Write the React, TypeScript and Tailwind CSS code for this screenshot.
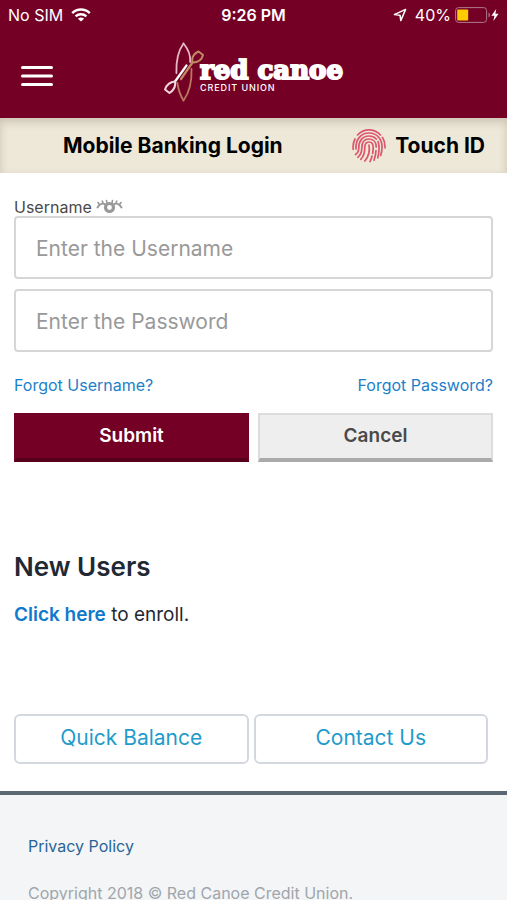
import { useState } from 'react';

function StatusBar() {
  return (
    <div className="grid h-[30px] grid-cols-3 items-center px-2 text-base text-white">
      <div className="flex items-center gap-2">
        <span>No SIM</span>
        <svg viewBox="0 0 20 14" className="h-[14px] w-5" fill="none" stroke="currentColor" strokeWidth="2.5">
          <path d="M1.2 5.2C6.2 0.4 13.8 0.4 18.8 5.2" />
          <path d="M4.6 8.4C7.7 5.6 12.3 5.6 15.4 8.4" />
          <path d="M10 13.6L6.9 10.7C8.7 9.2 11.3 9.2 13.1 10.7Z" fill="currentColor" stroke="none" />
        </svg>
      </div>
      <span className="text-center font-semibold">9:26 PM</span>
      <div className="flex items-center justify-end gap-1">
        <svg viewBox="0 0 14 14" className="mr-1 h-[14px] w-[14px]" fill="none" stroke="currentColor" strokeWidth="1.5" strokeLinejoin="round">
          <path d="M12.6 1.4L1.4 6.6L7 7.2L7.8 12.6Z" />
        </svg>
        <span>40%</span>
        <svg viewBox="0 0 36 16" className="h-4 w-9" fill="none">
          <rect x="0.6" y="0.6" width="31" height="14.8" rx="3" stroke="#b0788a" />
          <rect x="2.2" y="2.5" width="11" height="11" rx="1" fill="#ffcc00" />
          <path d="M33.5 5.5C35.4 6.3 35.4 9.7 33.5 10.5Z" fill="#b0788a" />
        </svg>
        <svg viewBox="0 0 8 12" className="-ml-1 h-3 w-2" fill="currentColor">
          <path d="M5.2 0L0.4 6.8H3.4L2.4 12L7.6 4.8H4.4Z" />
        </svg>
      </div>
    </div>
  );
}

function Logo() {
  return (
    <a href="#home" className="flex items-center text-white" aria-label="red canoe credit union">
      <svg viewBox="0 0 40 60" className="h-[60px] w-10" fill="none" strokeLinecap="round" strokeLinejoin="round">
        <path d="M19.5 1.5C14 9 12 19 12.4 31" stroke="#e6b7c4" strokeWidth="1.8" />
        <path d="M19.5 1.5C24.5 7.5 26.7 14 26.2 20" stroke="#e6b7c4" strokeWidth="1.8" />
        <path d="M27.5 27C28 40 25 51 19.5 58.5" stroke="#b97a5c" strokeWidth="1.8" />
        <path d="M13.3 41C14.5 48 16.5 54 19.5 58.5" stroke="#b97a5c" strokeWidth="1.8" />
        <path d="M22.5 23.5L11 39.5" stroke="#fff" strokeWidth="2.2" />
        <path d="M11 39.5C6 40 2.5 43 1 47.5L5.5 51C9.5 48.5 11.8 44.5 11 39.5Z" stroke="#f3d5dd" strokeWidth="2" />
        <path d="M17 37L28.5 20.5" stroke="#c08a63" strokeWidth="2.2" />
        <path d="M28.5 20.5C27.5 15.5 30 11.5 34.5 9.5L39 13C38 17 34.5 20.5 28.5 20.5Z" stroke="#c08a63" strokeWidth="2" />
      </svg>
      <span className="-ml-1 flex flex-col pt-1">
        <span className="font-['DejaVu_Serif',serif] text-[26px] leading-[26px] font-bold [-webkit-text-stroke:2px_white]">
          red canoe
        </span>
        <span className="text-[9px] leading-[9px] font-medium tracking-widest">CREDIT UNION</span>
      </span>
    </a>
  );
}

function WingedEye() {
  return (
    <svg viewBox="0 0 27 15" className="h-[15px] w-[27px]" fill="none" stroke="#999" strokeLinecap="round">
      <path d="M1.5 8.5C4 5 6 3.5 9.5 5.5M25.5 8.5C23 5 21 3.5 17.5 5.5" strokeWidth="2" />
      <path d="M3.5 5.5L2 3.5M7 4L6.2 2M11 4L10.5 1.5M16 4L16.5 1.5M20 4L20.8 2M23.5 5.5L25 3.5" strokeWidth="1.6" />
      <circle cx="13.5" cy="8.5" r="4" strokeWidth="3.2" />
    </svg>
  );
}

function Fingerprint() {
  return (
    <svg viewBox="0 0 34 34" className="h-[34px] w-[34px] text-[#dc5670]" fill="none" stroke="currentColor" strokeWidth="1.7" strokeLinecap="round">
      <path d="M5.5 6C12 -0.8 22 -0.8 28.5 6" />
      <path d="M30.5 8.5C32.5 11.5 33.2 15 33 19" />
      <path d="M3 10C1.2 13.5 0.8 17 1.2 20.5" />
      <path d="M4 20C3.4 11 8.5 4 17 4C25.5 4 30.6 11 30 19C30 21.5 29.5 24 28.7 26.5" />
      <path d="M3.5 25.5C5 24.5 6.8 22.5 6.8 19C6.6 12 10.5 7 17 7C20 7 22.5 8 24.3 10" />
      <path d="M26 12.5C27.5 16.5 27.4 22 25.8 28.8" />
      <path d="M5.8 28.3C8.5 26 9.8 23 9.8 19C9.8 13.5 12.3 10 17 10C21.7 10 24.2 13.5 24.2 18" />
      <path d="M24 21.5C23.8 25 23.2 28 22 31.2" />
      <path d="M8.8 30.4C11.5 27.5 12.8 23.5 12.8 18.5C12.8 15 14.2 13 17 13C19.8 13 21.2 15 21.2 18.5C21.2 21 21 22.5 20.6 24.5" />
      <path d="M20 27C19.5 29.2 18.9 30.8 18 32.6" />
      <path d="M17 16.2C18.2 23 16.5 27.8 12.8 32" />
    </svg>
  );
}

export default function App() {
  const [username, setUsername] = useState('');
  const [password, setPassword] = useState('');

  const clear = () => {
    setUsername('');
    setPassword('');
  };

  return (
    <div className="flex min-h-screen flex-col bg-white font-['Inter',sans-serif] text-[#1f2933]">
      <header className="bg-[#750026]">
        <StatusBar />
        <div className="grid h-[88px] grid-cols-[1fr_auto_1fr] items-start px-5 pt-3 pb-2">
          <button type="button" aria-label="Menu" className="w-fit self-center text-white">
            <svg viewBox="0 0 34 22" className="h-[22px] w-[34px]" stroke="currentColor" strokeWidth="3" strokeLinecap="round">
              <path d="M2.5 2.5H31.5M2.5 11H31.5M2.5 19.5H31.5" />
            </svg>
          </button>
          <Logo />
        </div>
      </header>

      <div className="flex h-[55px] items-center justify-between bg-[#ede8d8] pr-[22px] pl-[63px] text-[21px] font-bold text-black shadow-[inset_0_4px_8px_rgba(90,60,50,0.22)]">
        <h1>Mobile Banking Login</h1>
        <button type="button" className="flex items-center gap-[9px]">
          <Fingerprint />
          Touch ID
        </button>
      </div>

      <main className="px-[14px]">
        <form onSubmit={(e) => e.preventDefault()} className="pt-6">
          <label htmlFor="username" className="flex h-[19px] items-center gap-1 text-base text-[#4a4a4a]">
            Username
            <WingedEye />
          </label>
          <input
            id="username"
            type="text"
            value={username}
            onChange={(e) => setUsername(e.target.value)}
            placeholder="Enter the Username"
            className="block h-[63px] w-full rounded-sm border-2 border-[#d6d6d6] px-5 pt-0.5 text-[21px] placeholder:text-[#999]"
          />
          <input
            type="password"
            aria-label="Password"
            value={password}
            onChange={(e) => setPassword(e.target.value)}
            placeholder="Enter the Password"
            className="mt-[10px] block h-[63px] w-full rounded-sm border-2 border-[#d6d6d6] px-5 pt-0.5 text-[21px] placeholder:text-[#999]"
          />
          <div className="mt-[21px] flex justify-between text-base leading-6 text-[#1c7fca]">
            <a href="#forgot-username">Forgot Username?</a>
            <a href="#forgot-password">Forgot Password?</a>
          </div>
          <div className="mt-4 grid grid-cols-2 gap-[9px] text-[19px] font-semibold">
            <button type="submit" className="h-[49px] border-2 border-b-4 border-[#750026] border-b-[#56001c] bg-[#750026] text-white">
              Submit
            </button>
            <button
              type="button"
              onClick={clear}
              className="h-[49px] border-2 border-b-4 border-[#dcdcdc] border-b-[#aaa] bg-[#eee] text-[#4a4a4a]"
            >
              Cancel
            </button>
          </div>
        </form>

        <section className="pt-[89px]">
          <h2 className="text-[26px] leading-8 font-semibold">New Users</h2>
          <p className="mt-5 text-[19px] leading-6">
            <a href="#enroll" className="font-semibold text-[#0f79cc]">Click here</a> to enroll.
          </p>
        </section>

        <div className="mt-[87px] mr-[5px] grid grid-cols-2 gap-[5px] text-[21px] text-[#1f9bcb]">
          <button type="button" className="h-[50px] rounded-md border-2 border-[#d3d8de] pb-0.5">Quick Balance</button>
          <button type="button" className="h-[50px] rounded-md border-2 border-[#d3d8de] pb-0.5">Contact Us</button>
        </div>
      </main>

      <footer className="mt-[27px] grow border-t-4 border-[#5b6873] bg-[#f3f5f7] px-7 pt-[39px] text-base">
        <a href="#privacy" className="block leading-6 text-[#2a6496]">Privacy Policy</a>
        <p className="mt-7 leading-[14px] text-[#a0a6ac]">Copyright 2018 © Red Canoe Credit Union.</p>
      </footer>
    </div>
  );
}
